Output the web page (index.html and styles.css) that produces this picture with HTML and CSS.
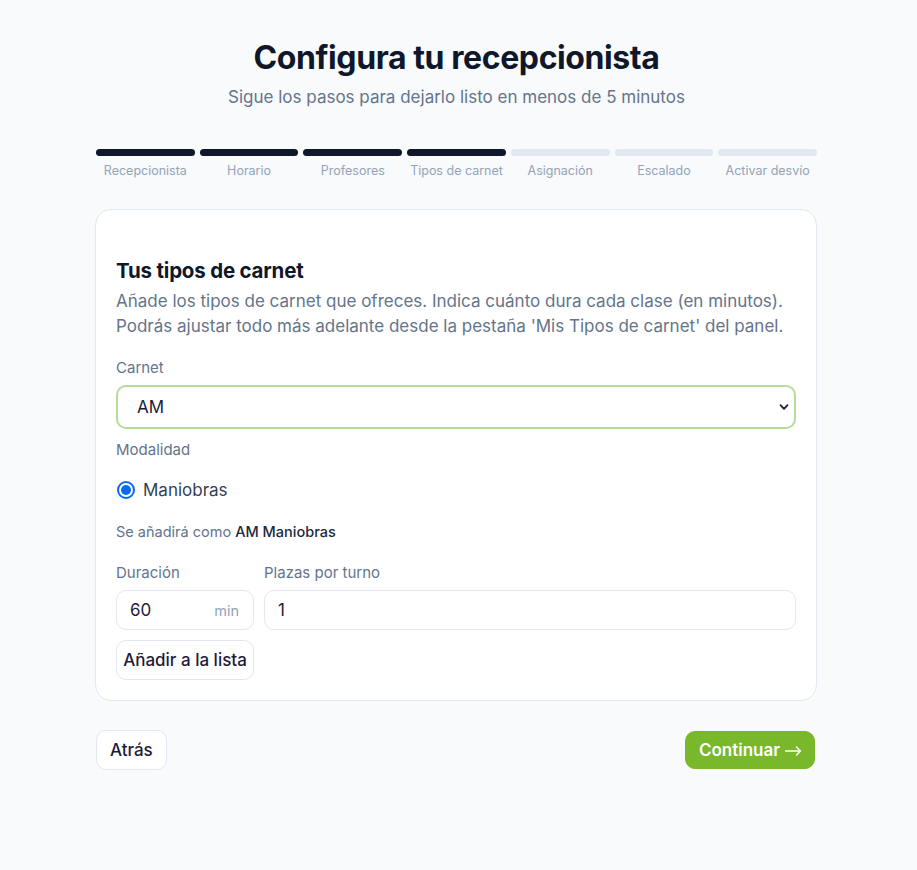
FILE: index.html
```html
<!DOCTYPE html>
<html lang="es">
<head>
  <meta charset="UTF-8" />
  <meta name="viewport" content="width=device-width, initial-scale=1.0" />
  <title>Configura tu recepcionista</title>
  <link rel="stylesheet" href="styles.css">
</head>
<body>
  <div class="wizard">
    <header class="head">
      <h1 class="title">Configura tu recepcionista</h1>
      <p class="subtitle">Sigue los pasos para dejarlo listo en menos de 5 minutos</p>
    </header>

    <div class="steps">
      <div class="step done"><span class="bar"></span><span class="label">Recepcionista</span></div>
      <div class="step done"><span class="bar"></span><span class="label">Horario</span></div>
      <div class="step done"><span class="bar"></span><span class="label">Profesores</span></div>
      <div class="step done"><span class="bar"></span><span class="label">Tipos de carnet</span></div>
      <div class="step"><span class="bar"></span><span class="label">Asignación</span></div>
      <div class="step"><span class="bar"></span><span class="label">Escalado</span></div>
      <div class="step"><span class="bar"></span><span class="label">Activar desvío</span></div>
    </div>

    <section class="card">
      <h2 class="card-title">Tus tipos de carnet</h2>
      <p class="card-desc">Añade los tipos de carnet que ofreces. Indica cuánto dura cada clase (en minutos). Podrás ajustar todo más adelante desde la pestaña 'Mis Tipos de carnet' del panel.</p>

      <div class="field">
        <label class="field-label">Carnet</label>
        <div class="select">
          <span>AM</span>
          <svg width="12" height="12" viewBox="0 0 12 12"><path d="M2.5 4.2 6 7.8l3.5-3.6" fill="none" stroke="#1e1b3a" stroke-width="1.8" stroke-linecap="round" stroke-linejoin="round"/></svg>
        </div>
      </div>

      <div class="field tight">
        <label class="field-label">Modalidad</label>
        <label class="radio"><span class="dot"></span>Maniobras</label>
      </div>

      <p class="hint">Se añadirá como <b>AM Maniobras</b></p>

      <div class="row">
        <div class="field narrow">
          <label class="field-label">Duración</label>
          <div class="input"><span>60</span><span class="unit">min</span></div>
        </div>
        <div class="field grow">
          <label class="field-label">Plazas por turno</label>
          <div class="input"><span>1</span></div>
        </div>
      </div>

      <button class="btn add">Añadir a la lista</button>
    </section>

    <footer class="actions">
      <button class="btn">Atrás</button>
      <button class="btn primary">Continuar
        <svg class="arrow" width="17" height="10" viewBox="0 0 17 10"><path d="M0.5 5h15M11.5 1l4 4-4 4" fill="none" stroke="#fff" stroke-width="1.4" stroke-linecap="round" stroke-linejoin="round"/></svg>
      </button>
    </footer>
  </div>
</body>
</html>
```

FILE: styles.css
```css
* {
  box-sizing: border-box;
  margin: 0;
  padding: 0;
}
body {
  background: #f8fafc;
  font-family: Inter, "Noto Sans", sans-serif;
  color: #0f172a;
  padding-right: 5px;
}
.wizard {
  width: 722px;
  margin: 0 auto;
  padding-top: 38px;
  padding-left: 1px;
}
.head {
  text-align: center;
}
.title {
  font-size: 32px;
  font-weight: 700;
  letter-spacing: -0.4px;
  line-height: 40px;
}
.subtitle {
  margin-top: 7px;
  font-size: 17px;
  color: #64748b;
  line-height: 24px;
}
.steps {
  display: flex;
  gap: 5px;
  margin-top: 40px;
}
.step {
  flex: 1;
  display: flex;
  flex-direction: column;
  align-items: center;
}
.bar {
  display: block;
  width: 100%;
  height: 7px;
  border-radius: 4px;
  background: #e2e8f0;
}
.step.done .bar {
  background: #0f172a;
}
.label {
  margin-top: 6px;
  font-size: 12.5px;
  color: #94a3b8;
  line-height: 18px;
}
.card {
  margin-top: 29px;
  margin-left: -1px;
  background: #fff;
  border: 1px solid #e2e8f0;
  border-radius: 16px;
  padding: 48px 20px 20px;
}
.card-title {
  font-size: 20.5px;
  font-weight: 650;
  line-height: 26px;
  letter-spacing: -0.2px;
}
.card-desc {
  margin-top: 5px;
  font-size: 17px;
  line-height: 25px;
  color: #64748b;
}
.field {
  margin-top: 19px;
  display: flex;
  flex-direction: column;
}
.field.tight {
  margin-top: 11px;
}
.field-label {
  font-size: 15px;
  color: #64748b;
  line-height: 20px;
}
.select {
  margin-top: 7px;
  height: 44px;
  border: 2px solid #b6dc98;
  border-radius: 10px;
  display: flex;
  align-items: center;
  justify-content: space-between;
  padding: 0 4px 0 19px;
  font-size: 17px;
  color: #1e1b3a;
}
.radio {
  margin-top: 20px;
  display: flex;
  align-items: center;
  gap: 8px;
  font-size: 17px;
  color: #334155;
  padding-left: 1px;
}
.dot {
  width: 18px;
  height: 18px;
  border-radius: 50%;
  border: 2px solid #0b6bf0;
  background: #fff;
  display: flex;
  align-items: center;
  justify-content: center;
}
.dot::after {
  content: "";
  width: 10px;
  height: 10px;
  border-radius: 50%;
  background: #0b6bf0;
}
.hint {
  margin-top: 22px;
  font-size: 14.5px;
  color: #64748b;
  line-height: 20px;
}
.hint b {
  color: #1e293b;
  font-weight: 500;
}
.row {
  display: flex;
  gap: 10px;
  margin-top: 21px;
}
.row .field {
  margin-top: 0;
}
.narrow {
  width: 138px;
}
.grow {
  flex: 1;
}
.input {
  margin-top: 7px;
  height: 40px;
  border: 1px solid #e2e8f0;
  border-radius: 10px;
  display: flex;
  align-items: center;
  justify-content: space-between;
  padding: 0 14px 0 13px;
  font-size: 17px;
  color: #1e1b3a;
}
.unit {
  font-size: 14.5px;
  color: #94a3b8;
}
.btn {
  font-family: inherit;
  font-size: 17px;
  font-weight: 500;
  color: #1e1b3a;
  background: #fff;
  border: 1px solid #e2e8f0;
  border-radius: 10px;
  height: 40px;
  padding: 0 13px;
  cursor: pointer;
}
.add {
  margin-top: 10px;
  width: 138px;
  padding: 0;
}
.actions {
  margin-top: 29px;
  display: flex;
  justify-content: space-between;
  align-items: center;
}
.primary {
  display: flex;
  align-items: center;
  gap: 5px;
  background: #78b82a;
  border-color: #78b82a;
  color: #fff;
  font-weight: 600;
  height: 38px;
  padding: 0 12px 0 13px;
  margin-right: 2px;
}
.arrow {
  margin-top: 1px;
}
```
